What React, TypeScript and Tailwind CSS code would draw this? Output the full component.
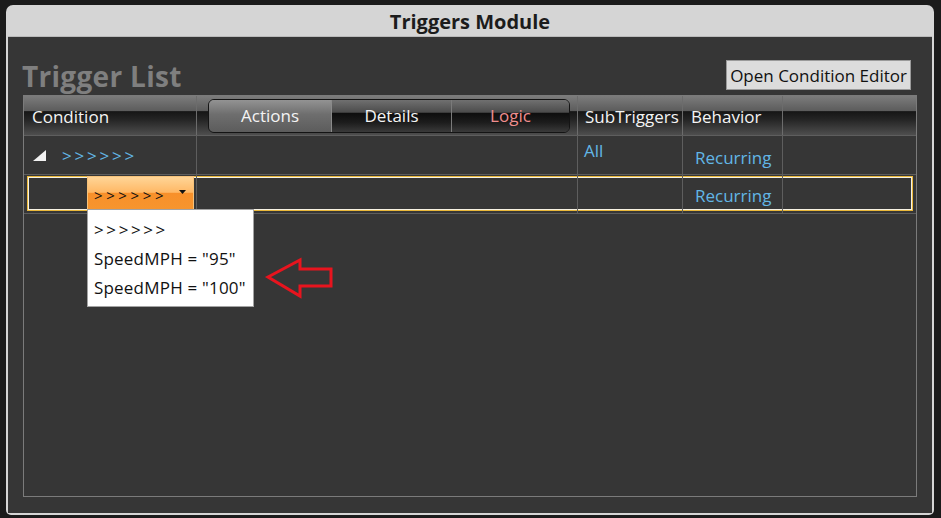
const font = { fontFamily: '"Open Sans", "Noto Sans", sans-serif' }

const headerCell =
  'h-full border-r border-[#6c6c6c] bg-[linear-gradient(to_bottom,#7c7c7c_0%,#5c5c5c_38%,#161616_40%,#262626_62%,#4e4e4e_100%)]'

function HeaderText({ children }: { children: React.ReactNode }) {
  return <span className="text-[17px] leading-none text-[#f4f4f4]">{children}</span>
}

function Triangle() {
  return (
    <svg width="13" height="11" viewBox="0 0 13 11" aria-hidden="true">
      <polygon points="13,0 13,11 0,11" fill="#f2f2f2" />
    </svg>
  )
}

function ArrowAnnotation() {
  return (
    <svg
      className="absolute left-[264px] top-[256px]"
      width="72"
      height="44"
      viewBox="0 0 72 44"
      aria-hidden="true"
    >
      <polygon
        points="4,21 36,4 36,13 67,13 67,30 36,30 36,40"
        fill="none"
        stroke="#e8141e"
        strokeWidth="3"
        strokeLinejoin="miter"
      />
    </svg>
  )
}

export default function App() {
  return (
    <div className="relative h-[518px] w-[941px] bg-[#1b1b1b] pl-[6px] pt-[5px]" style={font}>
      <div className="flex h-[510px] w-[928px] flex-col rounded-t-[7px] rounded-b-[5px] bg-[#d5d5d5] px-[2px] pb-[2px]">
        {/* Title bar */}
        <div className="flex h-[32px] items-center justify-center border-b border-[#bababa] pt-[3px] text-[20px] font-bold text-[#1c1c1c]">
          Triggers Module
        </div>

        {/* Content */}
        <div className="flex flex-1 flex-col bg-[#363636] px-[15px] pb-[16px]">
          <div className="flex h-[58px] items-end justify-between pb-[5px]">
            <h1 className="ml-[-1px] text-[28px] font-bold leading-[28px] tracking-[0.3px] text-[#7f7f7f]">Trigger List</h1>
            <button className="mr-[6px] h-[30px] border border-[#9a9a9a] bg-[#dcdcdc] px-[3px] text-[17px] leading-none text-[#111]">
              Open Condition Editor
            </button>
          </div>

          {/* Grid */}
          <div className="flex flex-1 flex-col border border-[#7b7b7b]">
            {/* Header row */}
            <div className="flex h-[40px] border-b border-[#5e5e5e]">
              <div className={`${headerCell} flex w-[173px] items-center px-[8px] pt-[1px]`}>
                <HeaderText>Condition</HeaderText>
              </div>
              <div className={`${headerCell} flex w-[381px] items-center pl-[11px] pr-[7px]`}>
                <div className="flex h-[34px] flex-1 overflow-hidden rounded-[6px] border border-[#141414] text-[17px]">
                  <div className="flex w-[123px] items-center justify-center border-r border-[#8a8a8a] bg-[linear-gradient(to_bottom,#939393_0%,#6e6e6e_45%,#5c5c5c_100%)] text-[#f4f4f4]">
                    Actions
                  </div>
                  <div className="flex w-[120px] items-center justify-center border-r border-[#7a7a7a] bg-[linear-gradient(to_bottom,#707070_0%,#4c4c4c_38%,#0e0e0e_42%,#1c1c1c_70%,#3a3a3a_100%)] text-[#f4f4f4]">
                    Details
                  </div>
                  <div className="flex flex-1 items-center justify-center bg-[linear-gradient(to_bottom,#707070_0%,#4c4c4c_38%,#0e0e0e_42%,#1c1c1c_70%,#3a3a3a_100%)] text-[#f08e8e]">
                    Logic
                  </div>
                </div>
              </div>
              <div className={`${headerCell} flex w-[105px] items-center px-[7px] pt-[1px]`}>
                <HeaderText>SubTriggers</HeaderText>
              </div>
              <div className={`${headerCell} flex w-[100px] items-center px-[8px] pt-[1px]`}>
                <HeaderText>Behavior</HeaderText>
              </div>
              <div className={`${headerCell} flex-1 border-r-0`} />
            </div>

            {/* Row 1 */}
            <div className="flex h-[39px] border-b border-[#5e5e5e] text-[17px] text-[#62b6e6]">
              <div className="flex w-[173px] items-center border-r border-[#5e5e5e] pl-[9px] pt-[1px]">
                <Triangle />
                <span className="ml-[16px] tracking-[2.8px]">&gt;&gt;&gt;&gt;&gt;&gt;</span>
              </div>
              <div className="w-[381px] border-r border-[#5e5e5e]" />
              <div className="w-[105px] border-r border-[#5e5e5e] pl-[6px] pt-[4px] leading-[22px]">All</div>
              <div className="flex w-[100px] items-center border-r border-[#5e5e5e] pl-[12px] pt-[6px]">Recurring</div>
              <div className="flex-1" />
            </div>

            {/* Row 2 (selected) */}
            <div className="relative flex h-[39px] border-b border-[#5e5e5e] text-[17px] text-[#62b6e6]">
              <div className="absolute bottom-[2px] left-[3px] right-[3px] top-[1px] border border-[#eab83a]">
                <div className="h-full w-full border border-[#f6f2e4]" />
              </div>
              <div className="relative w-[173px] border-r border-[#5e5e5e] pl-[63px] pt-[1px]">
                <div className="relative flex h-[34px] w-[107px] items-center justify-between border border-[#f6c27a] bg-[linear-gradient(to_bottom,#ffd597_0%,#ffb865_48%,#f8902a_50%,#f6952e_100%)] pl-[6px] pr-[7px] pt-[4px] text-[15px] text-[#111]">
                  <span className="tracking-[3.6px]">&gt;&gt;&gt;&gt;&gt;&gt;</span>
                  <svg width="7" height="4" viewBox="0 0 7 4" className="mb-[6px]" aria-hidden="true">
                    <polygon points="0,0 7,0 3.5,4" fill="#111" />
                  </svg>
                  {/* Dropdown list */}
                  <div className="absolute left-[-1px] top-[32px] z-10 flex h-[98px] w-[167px] flex-col border border-[#a3a3a3] bg-white pb-[4px] pl-[6px] pt-[5px] text-[17px] text-[#111]">
                    <div className="flex h-[30px] items-center tracking-[2.6px]">&gt;&gt;&gt;&gt;&gt;&gt;</div>
                    <div className="flex h-[30px] items-center tracking-[0.2px]">SpeedMPH = "95"</div>
                    <div className="flex h-[30px] items-center tracking-[0.2px]">SpeedMPH = "100"</div>
                  </div>
                </div>
              </div>
              <div className="relative w-[381px] border-r border-[#5e5e5e]" />
              <div className="relative w-[105px] border-r border-[#5e5e5e]" />
              <div className="relative flex w-[100px] items-center border-r border-[#5e5e5e] pl-[12px] pt-[3px]">
                Recurring
              </div>
              <div className="flex-1" />
            </div>

            <div className="flex-1" />
          </div>
        </div>
      </div>

      <ArrowAnnotation />
    </div>
  )
}
